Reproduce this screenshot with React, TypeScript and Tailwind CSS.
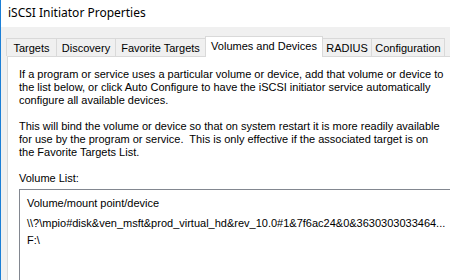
import React from 'react';

const tabs = [
  { label: 'Targets', w: 'w-[51px]' },
  { label: 'Discovery', w: 'w-[60px]' },
  { label: 'Favorite Targets', w: 'w-[91px]' },
  { label: 'Volumes and Devices', w: 'w-[118px]', active: true },
  { label: 'RADIUS', w: 'w-[50px]' },
  { label: 'Configuration', w: 'w-[74px]' },
];

export default function App() {
  return (
    <div className="w-[450px] h-[280px] overflow-hidden bg-[#f0f0f0] border-l border-[#1c7fd6] text-black font-['Liberation_Sans',Arial,sans-serif] text-[11px] leading-[13px]">
      {/* Title bar */}
      <div className="h-[27px] bg-white pl-[7px] pt-[5px] font-['Noto_Sans',sans-serif] text-[12px] leading-[16px]">
        iSCSI Initiator Properties
      </div>

      {/* Tab strip */}
      <div className="flex items-end h-[29px] pl-[6px]">
        {tabs.map((t) =>
          t.active ? (
            <div
              key={t.label}
              className={`${t.w} h-[21px] -ml-px -mb-px relative z-10 bg-white border border-b-0 border-[#d9d9d9] text-center pt-[3px] whitespace-nowrap`}
            >
              {t.label}
            </div>
          ) : (
            <div
              key={t.label}
              className={`${t.w} h-[18px] -ml-px border border-b-0 border-[#d9d9d9] bg-[#f0f0f0] text-center pt-[3px] whitespace-nowrap`}
            >
              {t.label}
            </div>
          )
        )}
      </div>

      {/* Panel */}
      <div className="ml-[6px] h-[230px] bg-white border-l border-t border-[#d9d9d9] pl-[11px] pt-[11px]">
        <div>If a program or service uses a particular volume or device, add that volume or device to</div>
        <div>the list below, or click Auto Configure to have the iSCSI initiator service automatically</div>
        <div>configure all available devices.</div>
        <div className="h-[13px]" />
        <div>This will bind the volume or device so that on system restart it is more readily available</div>
        <div className="whitespace-pre">for use by the program or service.  This is only effective if the associated target is on</div>
        <div>the Favorite Targets List.</div>
        <div className="h-[13px]" />
        <div>Volume List:</div>

        <div className="mt-[4px] w-[460px] h-[100px] border-l border-t border-[#828790] pl-[7px] pt-[7px] whitespace-nowrap">
          <div className="h-[20px]">Volume/mount point/device</div>
          <div className="h-[17px]">\\?\mpio#disk&amp;ven_msft&amp;prod_virtual_hd&amp;rev_10.0#1&amp;7f6ac24&amp;0&amp;3630303033464...</div>
          <div className="h-[17px]">F:\</div>
        </div>
      </div>
    </div>
  );
}
